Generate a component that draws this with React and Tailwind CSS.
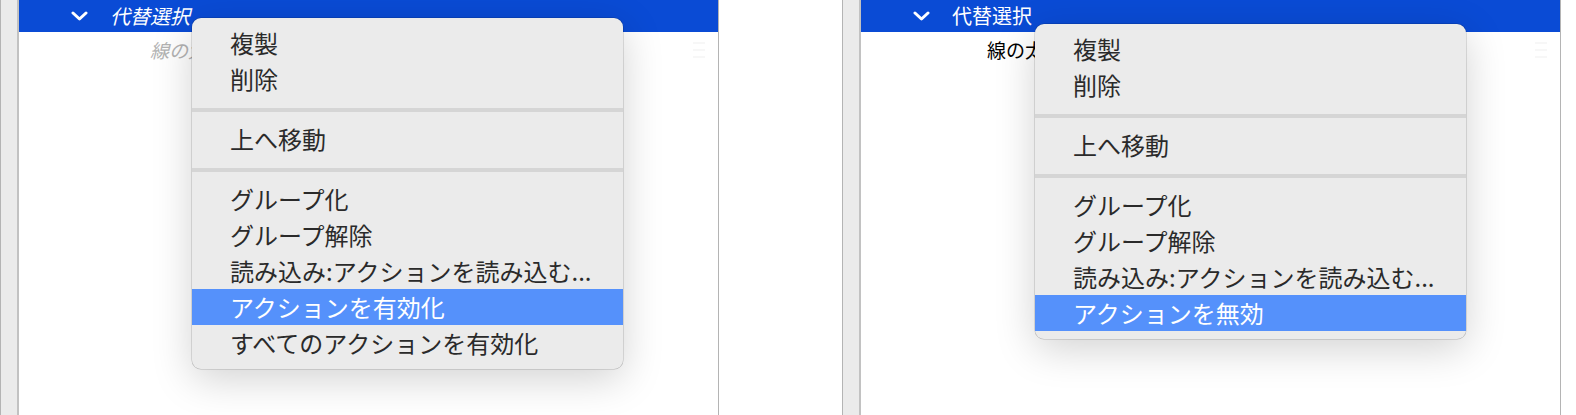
import React from 'react';

const FONT = { fontFamily: '"Noto Sans CJK JP", "Noto Sans", sans-serif' };

const LEFT_ITEMS = [
  ['複製', '削除'],
  ['上へ移動'],
  ['グループ化', 'グループ解除', '読み込み:アクションを読み込む...', 'アクションを有効化', 'すべてのアクションを有効化'],
];

const RIGHT_ITEMS = [
  ['複製', '削除'],
  ['上へ移動'],
  ['グループ化', 'グループ解除', '読み込み:アクションを読み込む...', 'アクションを無効'],
];

const Chevron = () => (
  <svg className="h-[10px] w-[17px]" viewBox="0 0 17 10" fill="none">
    <path d="M2 2l6.5 6L15 2" stroke="white" strokeWidth={3} strokeLinecap="round" strokeLinejoin="round" />
  </svg>
);

const Handle = () => (
  <svg className="h-[18px] w-[14px]" viewBox="0 0 14 18" fill="none">
    <path d="M1 2h12M1 9h12M1 16h12" stroke="#f5f5f5" strokeWidth={1.5} />
  </svg>
);

const ContextMenu = ({ groups, highlighted, className }) => (
  <div
    className={`absolute w-[431px] rounded-[9px] bg-[#ebebeb] pt-[7px] pb-2 shadow-[0_10px_40px_rgba(0,0,0,0.18),0_0_0_0.5px_rgba(0,0,0,0.22)] ${className}`}
  >
    {groups.map((group, gi) => (
      <div key={gi}>
        {gi > 0 && <div className="mt-[11px] mb-[9px] h-[4px] bg-[#d5d5d5]" />}
        {group.map((label) => (
          <div
            key={label}
            className={`flex h-9 items-center pl-[38px] text-[24px] ${
              label === highlighted ? 'bg-[#5591fb] text-white' : 'text-[#2a2a2a]'
            }`}
          >
            {label}
          </div>
        ))}
      </div>
    ))}
  </div>
);

const Panel = ({ italic, width, menu }) => (
  <div className="relative flex h-full shrink-0" style={{ width }}>
    <div className="w-[19px] shrink-0 border-l border-r-2 border-l-[#b4b4b4] border-r-[#c2c2c2] bg-[#ebebeb]" />
    <div className="flex w-[700px] shrink-0 flex-col border-r border-[#b4b4b4] bg-white">
      <div className="flex h-8 items-center bg-[#0a4bd5] pl-[52px] text-white">
        <Chevron />
        <span className={`ml-[22px] text-[20px] ${italic ? 'italic' : ''}`}>代替選択</span>
      </div>
      <div className="flex h-9 items-center justify-between pr-[12px]">
        <span
          className={`text-[19px] ${italic ? 'pl-[131px] italic text-[#b3b3b3]' : 'pl-[126px] text-black'}`}
        >
          線の太さ
        </span>
        <Handle />
      </div>
    </div>
    <div className="flex-1 bg-white" />
    {menu}
  </div>
);

export default function App() {
  return (
    <div className="flex h-[415px] w-[1576px] overflow-hidden bg-white" style={FONT}>
      <Panel
        italic
        width={842}
        menu={<ContextMenu groups={LEFT_ITEMS} highlighted="アクションを有効化" className="left-[192px] top-[18px]" />}
      />
      <Panel
        width={734}
        menu={<ContextMenu groups={RIGHT_ITEMS} highlighted="アクションを無効" className="left-[193px] top-6" />}
      />
    </div>
  );
}
